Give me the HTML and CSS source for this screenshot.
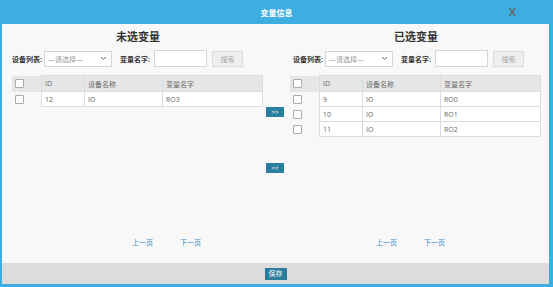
FILE: index.html
```html
<!DOCTYPE html>
<html lang="zh-CN">
<head>
    <meta charset="UTF-8">
    <title>变量信息</title>
    <link rel="stylesheet" href="styles.css">
</head>
<body>
    <div class="dialog">
        <div class="title-bar">
            <span class="title">变量信息</span>
            <span class="close">X</span>
        </div>

        <div class="content">
            <!-- left: variables not selected -->
            <div class="panel panel-left">
                <h2>未选变量</h2>
                <div class="filter">
                    <label>设备列表:</label>
                    <div class="select">
                        <span>—请选择—</span>
                        <svg width="7" height="5" viewBox="0 0 7 5"><path d="M1 1l2.5 2.5L6 1" fill="none" stroke="#666" stroke-width="1"/></svg>
                    </div>
                    <label class="name-label">变量名字:</label>
                    <input type="text" class="name-input">
                    <button class="btn-search">搜索</button>
                </div>
                <table class="var-table">
                    <thead>
                        <tr>
                            <th class="col-chk"><span class="chk"></span></th>
                            <th class="col-id">ID</th>
                            <th class="col-dev">设备名称</th>
                            <th class="col-name">变量名字</th>
                        </tr>
                    </thead>
                    <tbody>
                        <tr>
                            <td class="col-chk"><span class="chk"></span></td>
                            <td>12</td>
                            <td>IO</td>
                            <td>RO3</td>
                        </tr>
                    </tbody>
                </table>
                <div class="pager">
                    <a href="#">上一页</a>
                    <a href="#">下一页</a>
                </div>
            </div>

            <div class="move-col">
                <button class="btn-move btn-add">&gt;&gt;</button>
                <button class="btn-move btn-remove">&lt;&lt;</button>
            </div>

            <!-- right: selected variables -->
            <div class="panel panel-right">
                <h2>已选变量</h2>
                <div class="filter">
                    <label>设备列表:</label>
                    <div class="select">
                        <span>—请选择—</span>
                        <svg width="7" height="5" viewBox="0 0 7 5"><path d="M1 1l2.5 2.5L6 1" fill="none" stroke="#666" stroke-width="1"/></svg>
                    </div>
                    <label class="name-label">变量名字:</label>
                    <input type="text" class="name-input">
                    <button class="btn-search">搜索</button>
                </div>
                <table class="var-table">
                    <thead>
                        <tr>
                            <th class="col-chk"><span class="chk"></span></th>
                            <th class="col-id">ID</th>
                            <th class="col-dev">设备名称</th>
                            <th class="col-name">变量名字</th>
                        </tr>
                    </thead>
                    <tbody>
                        <tr>
                            <td class="col-chk"><span class="chk"></span></td>
                            <td>9</td>
                            <td>IO</td>
                            <td>RO0</td>
                        </tr>
                        <tr>
                            <td class="col-chk"><span class="chk"></span></td>
                            <td>10</td>
                            <td>IO</td>
                            <td>RO1</td>
                        </tr>
                        <tr>
                            <td class="col-chk"><span class="chk"></span></td>
                            <td>11</td>
                            <td>IO</td>
                            <td>RO2</td>
                        </tr>
                    </tbody>
                </table>
                <div class="pager">
                    <a href="#">上一页</a>
                    <a href="#">下一页</a>
                </div>
            </div>
        </div>

        <div class="footer">
            <button class="btn-save">保存</button>
        </div>
    </div>
</body>
</html>
```

FILE: styles.css
```css
body {
    margin: 0;
    padding: 0;
    font-family: "Open Sans", "Noto Sans CJK SC", sans-serif;
    background-color: #fff;
}

.dialog {
    width: 553px;
    height: 287px;
    box-sizing: border-box;
    border-left: 2px solid #3eaee0;
    border-right: 4px solid #3eaee0;
    border-bottom: 3px solid #3eaee0;
    background-color: #f8f8f8;
    display: flex;
    flex-direction: column;
}

.title-bar {
    height: 24px;
    background-color: #3eaee0;
    margin-right: -4px;
    margin-left: -2px;
    display: flex;
    align-items: center;
    justify-content: center;
    position: relative;
}

.title {
    color: #fff;
    font-size: 8px;
    font-weight: bold;
}

.close {
    position: absolute;
    right: 37px;
    top: 6px;
    color: #666;
    font-family: "Liberation Sans", sans-serif;
    font-weight: bold;
    font-size: 11px;
}

.content {
    flex: 1;
    display: flex;
}

.panel {
    display: flex;
    flex-direction: column;
}

.panel-left {
    width: 252px;
    padding-left: 10px;
}

.panel-right {
    width: 252px;
    padding-left: 4px;
}

.panel h2 {
    margin: 4px 0 0;
    font-size: 11px;
    font-weight: 600;
    color: #333;
    text-align: center;
    height: 17px;
    line-height: 17px;
}

.filter {
    display: flex;
    align-items: center;
    height: 17px;
    margin-top: 5px;
    font-size: 7px;
    color: #333;
}

.panel-right .filter {
    padding-left: 3px;
}

.filter label {
    font-weight: bold;
    margin-right: 2px;
}

.select {
    width: 68px;
    height: 16px;
    box-sizing: border-box;
    border: 1px solid #d6d6d6;
    background-color: #fff;
    display: flex;
    align-items: center;
    justify-content: space-between;
    padding: 0 4px 0 3px;
    color: #999;
    font-size: 7px;
}

.name-label {
    margin-left: 8px;
}

.name-input {
    width: 53px;
    height: 17px;
    box-sizing: border-box;
    border: 1px solid #d6d6d6;
    background-color: #fff;
    margin: 0 5px 0 2px;
    padding: 0;
}

.btn-search {
    width: 31px;
    height: 16px;
    border: 1px solid #ddd;
    background-color: #eee;
    color: #aaa;
    font-family: inherit;
    font-size: 7px;
    padding: 0;
}

.var-table {
    border-collapse: collapse;
    margin-top: 8px;
    width: 251px;
    font-size: 7px;
    color: #666;
}

.var-table th,
.var-table td {
    height: 14px;
    padding: 0 0 0 3px;
    text-align: left;
    font-weight: normal;
    border: 1px solid #dcdcdc;
}

.var-table th {
    background-color: #e6e6e6;
    height: 15px;
}

.var-table td {
    background-color: #fff;
}

.var-table .col-chk {
    width: 26px;
    padding-left: 3px;
    border: none;
}

.var-table td.col-chk {
    background-color: transparent;
}

.col-id { width: 39px; }
.col-dev { width: 74px; }

.chk {
    display: block;
    width: 7px;
    height: 7px;
    border: 1px solid #aaa;
    border-radius: 1px;
    background-color: #fff;
}

.pager {
    margin-top: auto;
    margin-bottom: 16px;
    display: flex;
    gap: 27px;
    font-size: 7px;
}

.panel-left .pager {
    padding-left: 120px;
}

.panel-right .pager {
    padding-left: 86px;
}

.pager a {
    color: #3a8bc6;
    text-decoration: none;
}

.move-col {
    width: 22px;
    display: flex;
    flex-direction: column;
    align-items: center;
    padding-top: 83px;
}

.btn-move {
    width: 18px;
    height: 10px;
    border: none;
    background-color: #2a7fa0;
    color: #fff;
    font-size: 6px;
    padding: 0;
    line-height: 10px;
}

.btn-remove {
    margin-top: 46px;
}

.footer {
    height: 21px;
    background-color: #dcdcdc;
    display: flex;
    align-items: center;
    justify-content: center;
}

.btn-save {
    width: 22px;
    height: 12px;
    border: none;
    background-color: #2b7d9c;
    color: #fff;
    font-family: inherit;
    font-size: 7px;
    padding: 0;
    line-height: 12px;
}
```
